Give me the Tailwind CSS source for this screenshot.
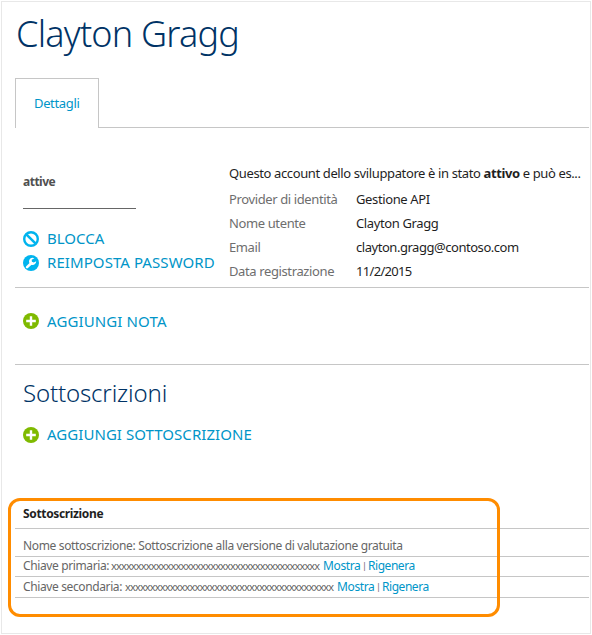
<!DOCTYPE html>
<html lang="it">
<head>
<meta charset="utf-8">
<title>Clayton Gragg</title>
<script src="https://cdn.jsdelivr.net/npm/@tailwindcss/browser@4"></script>
</head>
<body class="bg-white font-['Noto_Sans','Open_Sans',sans-serif] text-[13px] tracking-[-0.38px] text-[#1f1f1f]">
<div class="pt-px pl-px w-[592px] h-[635px] overflow-hidden">
<main class="relative w-[590px] h-[633px] border border-[#e8e8e8] pl-[13px] pr-px whitespace-nowrap">
  <h1 class="h-[76px] pl-px pt-[8px] text-[36px] leading-[48px] font-light tracking-[-0.78px] text-[#003366]">Clayton Gragg</h1>

  <nav class="flex h-[50px]">
    <a class="w-[84px] shrink-0 border border-b-0 border-[#c6c6c6] pl-[18px] pt-[14px] leading-[20px] tracking-[-0.35px] text-[#0095c8]">Dettagli</a>
    <div class="grow border-b border-[#c6c6c6]"></div>
  </nav>

  <section class="flex h-[160px] border-b border-[#c6c6c6] pl-[8px]">
    <div class="w-[206px] shrink-0">
      <div class="mt-[44px] h-[37px] w-[113px] border-b border-[#666] text-[12px] leading-[20px] font-bold tracking-[-0.5px] text-[#505050]">attive</div>
      <div class="mt-[18px] flex h-[24px] items-center gap-2 text-[15px] tracking-normal text-[#0095c8]">
        <svg class="size-4 shrink-0" viewBox="0 0 16 16" fill="none" stroke="#00b4ee"><circle cx="8" cy="8" r="6.8" stroke-width="2.4"/><path d="M3.3 3.3l9.4 9.4" stroke-width="2.5"/></svg>
        <span class="pb-[2px]">BLOCCA</span>
      </div>
      <div class="flex h-[24px] items-center gap-2 text-[15px] tracking-[0.08px] text-[#0095c8]">
        <svg class="size-4 shrink-0" viewBox="0 0 16 16"><circle cx="8" cy="8" r="8" fill="#00b4ee"/><path d="M4.1 12.1L8.2 8.2" stroke="#fff" stroke-width="2.6" stroke-linecap="round"/><path d="M11.4 3.2A3.6 3.6 0 1 0 13.2 6.2L10.8 7.4L8.9 6.8L8.7 4.7Z" fill="#fff"/></svg>
        <span class="pb-[2px]">REIMPOSTA PASSWORD</span>
      </div>
    </div>
    <div class="pt-[33px]">
      <p class="h-[26px] leading-[24px]">Questo account dello sviluppatore è in stato <b class="font-bold">attivo</b> e può es...</p>
      <dl class="grid grid-cols-[127px_auto] leading-[24px]">
        <dt class="text-[#6e6e6e]">Provider di identità</dt><dd>Gestione API</dd>
        <dt class="text-[#6e6e6e]">Nome utente</dt><dd>Clayton Gragg</dd>
        <dt class="text-[#6e6e6e]">Email</dt><dd class="tracking-[-0.46px]">clayton.gragg@contoso.com</dd>
        <dt class="text-[#6e6e6e]">Data registrazione</dt><dd class="tracking-[-0.68px]">11/2/2015</dd>
      </dl>
    </div>
  </section>

  <section class="h-[77px] border-b border-[#c6c6c6] pl-[8px] pt-[21px]">
    <div class="flex h-[24px] items-center gap-2 text-[15px] tracking-[0.12px] text-[#0095c8]">
      <svg class="size-4 shrink-0" viewBox="0 0 16 16"><circle cx="8" cy="8" r="8" fill="#7fba00"/><path d="M8 3.2v9.6M3.2 8h9.6" stroke="#fff" stroke-width="2.4"/></svg>
      <span>AGGIUNGI NOTA</span>
    </div>
  </section>

  <section class="h-[134px] pl-[8px] pt-[10px]">
    <h2 class="h-[48px] text-[24px] leading-[36px] font-light tracking-[-0.15px] text-[#003366]">Sottoscrizioni</h2>
    <div class="flex h-[24px] items-center gap-2 text-[15px] tracking-[0.05px] text-[#0095c8]">
      <svg class="size-4 shrink-0" viewBox="0 0 16 16"><circle cx="8" cy="8" r="8" fill="#7fba00"/><path d="M8 3.2v9.6M3.2 8h9.6" stroke="#fff" stroke-width="2.4"/></svg>
      <span class="pb-[2px]">AGGIUNGI SOTTOSCRIZIONE</span>
    </div>
  </section>

  <section class="text-[12px] text-[#666]">
    <h3 class="h-[30px] border-b border-[#c6c6c6] pl-[8px] pt-[5px] leading-[20px] font-bold tracking-[-0.35px] text-[#1f1f1f]">Sottoscrizione</h3>
    <div class="h-[28px] border-b border-[#c6c6c6] pl-[8px] pt-[7px] leading-[20px] tracking-[-0.35px]">Nome sottoscrizione: Sottoscrizione alla versione di valutazione gratuita</div>
    <div class="flex h-[20px] border-b border-[#c6c6c6] pl-[8px] leading-[18px]">
      <span class="w-[88px]">Chiave primaria:</span><span class="w-[212px] text-[11px] tracking-[-0.86px]">xxxxxxxxxxxxxxxxxxxxxxxxxxxxxxxxxxxxxxxxxx</span><a class="w-[38px] text-[#0095c8]">Mostra</a><span class="w-[7px] pl-px text-[9px]">|</span><a class="tracking-[-0.45px] text-[#0095c8]">Rigenera</a>
    </div>
    <div class="flex h-[21px] border-b border-[#c6c6c6] pl-[8px] leading-[20px]">
      <span class="w-[102px]">Chiave secondaria:</span><span class="w-[212px] text-[11px] tracking-[-0.86px]">xxxxxxxxxxxxxxxxxxxxxxxxxxxxxxxxxxxxxxxxxx</span><a class="w-[38px] text-[#0095c8]">Mostra</a><span class="w-[7px] pl-px text-[9px]">|</span><a class="tracking-[-0.45px] text-[#0095c8]">Rigenera</a>
    </div>
  </section>

  <div class="absolute left-[6px] top-[496px] h-[119px] w-[492px] rounded-[12px] border-[3px] border-[#ff8c00]"></div>
</main>
</div>
</body>
</html>
